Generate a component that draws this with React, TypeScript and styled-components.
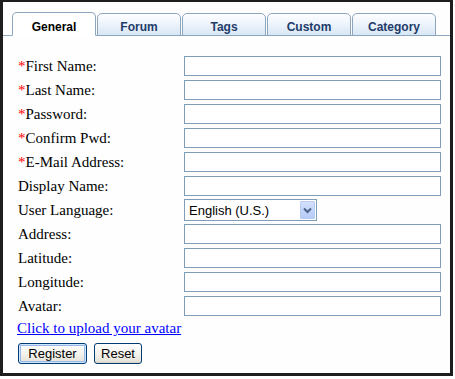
import React from "react";
import styled, { createGlobalStyle, css } from "styled-components";

const Global = createGlobalStyle`
  html, body { margin: 0; padding: 0; background: #ffffff; }
  * { box-sizing: border-box; }
`;

const Frame = styled.div`
  width: 453px;
  height: 376px;
  border-style: solid;
  border-color: #1e1e1e;
  border-width: 2px 3px 3px 3px;
  background: #fefefe;
  padding-top: 10px;
  display: flex;
  flex-direction: column;
`;

const TabBar = styled.div`
  display: flex;
  align-items: flex-end;
  gap: 1px;
  height: 24px;
  padding-left: 9px;
  border-bottom: 1px solid #8ea6bd;
`;

const Tab = styled.div<{ $active?: boolean }>`
  width: 84px;
  margin-bottom: -1px;
  border: 1px solid #8ea6bd;
  border-radius: 5px 5px 0 0;
  font-family: "Liberation Sans", Arial, sans-serif;
  font-weight: bold;
  font-size: 12px;
  text-align: center;
  padding-top: 6px;
  ${(p) =>
    p.$active
      ? css`
          height: 24px;
          background: #ffffff;
          border-bottom-color: #ffffff;
          color: #000000;
          padding-top: 7px;
        `
      : css`
          height: 23px;
          background: linear-gradient(#fdfeff, #eef4fb 45%, #d8e7f6);
          color: #1e3c6a;
        `}
`;

const Form = styled.form`
  display: flex;
  flex-direction: column;
  padding: 18px 0 0 15px;
`;

const Grid = styled.div`
  display: grid;
  grid-template-columns: 166px 257px;
  grid-auto-rows: 24px;
  align-items: center;
`;

const Label = styled.label`
  font-family: "Liberation Serif", "Times New Roman", serif;
  font-size: 15px;
  color: #000;
  white-space: nowrap;
`;

const Req = styled.span`
  color: #ff0000;
`;

const TextInput = styled.input`
  width: 257px;
  height: 20px;
  border: 1px solid #7f9db9;
  background: #fff;
  padding: 0 3px;
  font-family: "Liberation Sans", Arial, sans-serif;
  font-size: 13px;
  outline: none;
`;

const SelectWrap = styled.div`
  position: relative;
  width: 133px;
  height: 22px;
`;

const Select = styled.select`
  appearance: none;
  -webkit-appearance: none;
  width: 133px;
  height: 22px;
  border: 1px solid #7f9db9;
  border-radius: 0;
  background: #fff;
  padding: 0 0 0 4px;
  font-family: "Liberation Sans", Arial, sans-serif;
  font-size: 13px;
  color: #000;
  outline: none;
`;

const Arrow = styled.span`
  position: absolute;
  top: 2px;
  right: 2px;
  width: 15px;
  height: 18px;
  border: 1px solid #b9cbf3;
  border-radius: 1px;
  background: linear-gradient(#d3e0fd, #c1d3fb 60%, #b6cbf9);
  display: flex;
  align-items: center;
  justify-content: center;
  pointer-events: none;
`;

const UploadLink = styled.a`
  display: block;
  margin-top: 1px;
  margin-left: -1px;
  font-family: "Liberation Serif", "Times New Roman", serif;
  font-size: 15px;
  line-height: 18px;
  color: #0000ff;
  text-decoration: underline;
  align-self: flex-start;
`;

const Buttons = styled.div`
  display: flex;
  gap: 7px;
  margin-top: 6px;
`;

const Button = styled.button<{ $primary?: boolean; $w: number }>`
  width: ${(p) => p.$w}px;
  height: 21px;
  padding: 0;
  border: 1px solid #003c74;
  border-radius: 3px;
  background: linear-gradient(#ffffff, #f4f3ee 50%, #e6e4da 90%, #d6d0c5);
  font-family: "Liberation Sans", Arial, sans-serif;
  font-size: 13px;
  color: #000;
  ${(p) =>
    p.$primary &&
    css`
      box-shadow: inset 0 0 0 1px #cee7ff, inset 0 0 0 2px #98b8ea;
    `}
`;

const fields: { label: string; req?: boolean; type?: string }[] = [
  { label: "First Name:", req: true },
  { label: "Last Name:", req: true },
  { label: "Password:", req: true, type: "password" },
  { label: "Confirm Pwd:", req: true, type: "password" },
  { label: "E-Mail Address:", req: true },
  { label: "Display Name:" },
];

const fields2 = ["Address:", "Latitude:", "Longitude:", "Avatar:"];

export default function App() {
  return (
    <>
      <Global />
      <Frame>
        <TabBar>
          <Tab $active>General</Tab>
          <Tab>Forum</Tab>
          <Tab>Tags</Tab>
          <Tab>Custom</Tab>
          <Tab>Category</Tab>
        </TabBar>
        <Form onSubmit={(e) => e.preventDefault()}>
          <Grid>
            {fields.map((f) => (
              <React.Fragment key={f.label}>
                <Label>
                  {f.req && <Req>*</Req>}
                  {f.label}
                </Label>
                <TextInput type={f.type || "text"} />
              </React.Fragment>
            ))}
            <Label>User Language:</Label>
            <SelectWrap>
              <Select defaultValue="en-US">
                <option value="en-US">English (U.S.)</option>
              </Select>
              <Arrow>
                <svg width="9" height="7" viewBox="0 0 9 7">
                  <path d="M1 1.5 L4.5 5 L8 1.5" fill="none" stroke="#4d6185" strokeWidth="2" />
                </svg>
              </Arrow>
            </SelectWrap>
            {fields2.map((l) => (
              <React.Fragment key={l}>
                <Label>{l}</Label>
                <TextInput type="text" />
              </React.Fragment>
            ))}
          </Grid>
          <UploadLink href="#">Click to upload your avatar</UploadLink>
          <Buttons>
            <Button $primary $w={69} type="submit">Register</Button>
            <Button $w={48} type="reset">Reset</Button>
          </Buttons>
        </Form>
      </Frame>
    </>
  );
}
